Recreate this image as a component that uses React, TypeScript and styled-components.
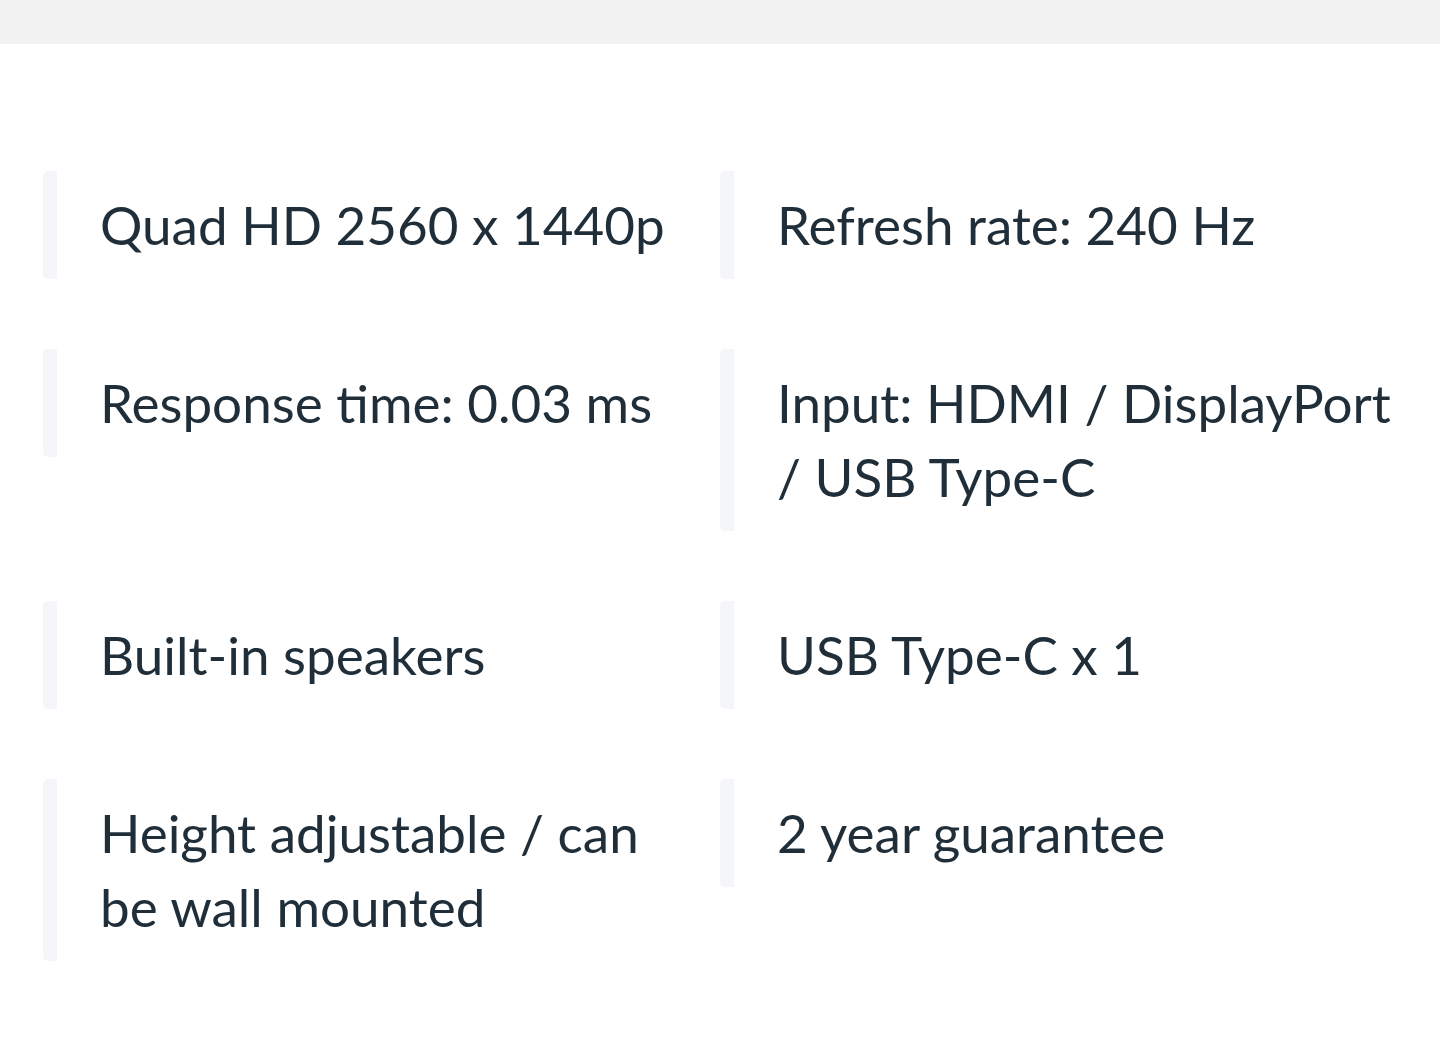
import styled, { createGlobalStyle } from "styled-components";

const GlobalStyle = createGlobalStyle`
  html, body {
    margin: 0;
    padding: 0;
    background: #ffffff;
  }
  body {
    font-family: "Lato", "Liberation Sans", sans-serif;
    -webkit-font-smoothing: antialiased;
  }
`;

const TopBar = styled.div`
  height: 44px;
  background: #f2f2f2;
`;

const Section = styled.section`
  padding: 127px 43px 80px;
`;

const SpecGrid = styled.ul`
  list-style: none;
  margin: 0;
  padding: 0;
  display: grid;
  grid-template-columns: 1fr 1fr;
  column-gap: 0;
  row-gap: 70px;
  align-items: start;
`;

const SpecItem = styled.li`
  position: relative;
  padding: 17px 0 17px 57px;
  font-size: 53px;
  line-height: 74px;
  font-weight: 400;
  color: #1f2e38;
  white-space: pre;

  &::before {
    content: "";
    position: absolute;
    left: 0;
    top: 0;
    bottom: 0;
    width: 14px;
    background: #f5f6fa;
    border-radius: 5px 0 0 5px;
  }
`;

const specs = [
  "Quad HD 2560 x 1440p",
  "Refresh rate: 240 Hz",
  "Response time: 0.03 ms",
  "Input: HDMI / DisplayPort\n/ USB Type-C",
  "Built-in speakers",
  "USB Type-C x 1",
  "Height adjustable / can\nbe wall mounted",
  "2 year guarantee",
];

const App: React.FC = () => {
  return (
    <>
      <GlobalStyle />
      <TopBar />
      <Section>
        <SpecGrid>
          {specs.map((text) => (
            <SpecItem key={text}>{text}</SpecItem>
          ))}
        </SpecGrid>
      </Section>
    </>
  );
};

export default App;
